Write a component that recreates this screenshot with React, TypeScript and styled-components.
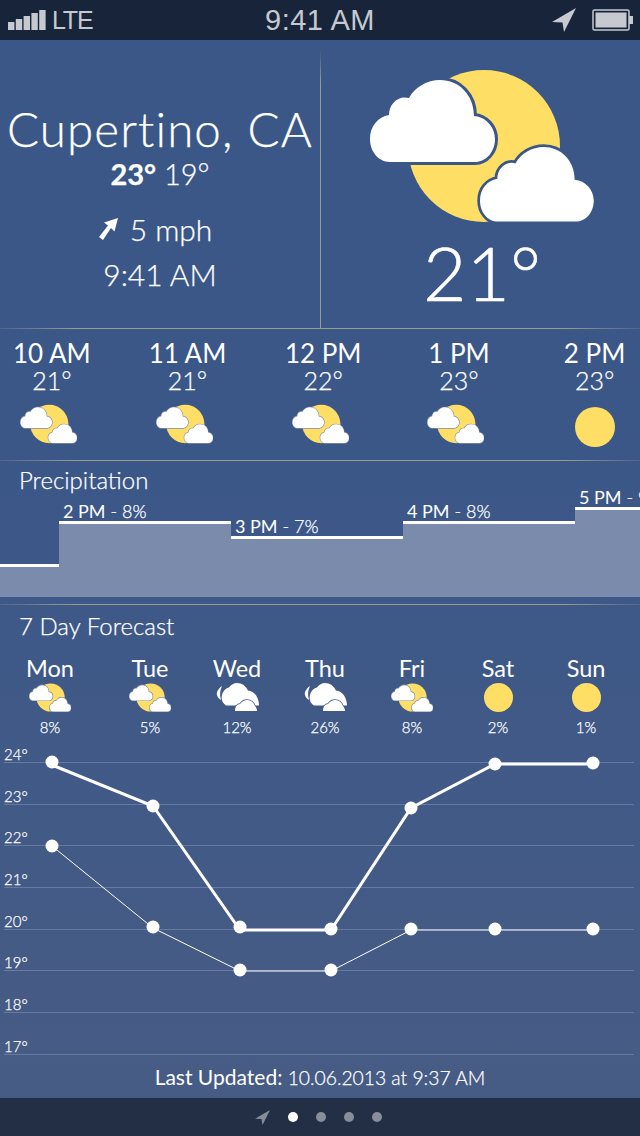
import React from "react";
import styled, { createGlobalStyle } from "styled-components";

const GlobalStyle = createGlobalStyle`
  html, body { margin: 0; padding: 0; background: #222f44; }
  * { box-sizing: border-box; }
`;

const CLOUD = "M20 82C8 82 0 71 0 59C0 46 8 37 19 35C19 24 28 15 39 18C45 7 57 0 70 0C89 0 104 15 104 36C116 37 125 47 125 59C125 72 116 82 105 82Z";

const Phone = styled.div`
  width: 640px;
  height: 1136px;
  display: flex;
  flex-direction: column;
  overflow: hidden;
  color: #fff;
  font-family: Lato, "Open Sans", sans-serif;
  font-weight: 300;
  -webkit-text-stroke: 0.25px #fff;
`;

const StatusBar = styled.div`
  height: 40px;
  flex: none;
  background: #18243a;
  color: #c6cad0;
  -webkit-text-stroke: 0;
  font-family: "Liberation Sans", Arial, sans-serif;
  font-size: 29px;
  font-weight: 400;
  display: grid;
  grid-template-columns: 1fr auto 1fr;
  align-items: center;
`;

const StatusGroup = styled.div<{ $end?: boolean }>`
  display: flex;
  align-items: center;
  gap: ${(p) => (p.$end ? "16px" : "6px")};
  padding-left: ${(p) => (p.$end ? "0" : "8px")};
  justify-content: ${(p) => (p.$end ? "flex-end" : "flex-start")};
`;

const Clock = styled.span`
  letter-spacing: 0.5px;
`;

const Carrier = styled.span`
  font-size: 25px;
  letter-spacing: -1.2px;
`;

const Content = styled.div`
  flex: 1;
  display: flex;
  flex-direction: column;
  background: linear-gradient(#3b5788, #3b5788 40%, #475c85);
`;

const Hero = styled.div`
  height: 288px;
  flex: none;
  display: grid;
  grid-template-columns: 320px 1px 319px;
`;

const HeroLeft = styled.div`
  display: flex;
  flex-direction: column;
  align-items: center;
  padding-top: 58px;
`;

const City = styled.div`
  font-size: 47.5px;
  line-height: 62px;
  letter-spacing: 1.1px;
  white-space: nowrap;
`;

const HighLow = styled.div`
  font-size: 29px;
  line-height: 28px;
  b { font-weight: 700; }
`;

const HeroLine = styled.div`
  font-size: 30px;
  line-height: 40px;
  display: flex;
  align-items: center;
  gap: 10px;
  margin-top: 21px;
  & + & { margin-top: 5px; }
`;

const WindSpeed = styled.span`
  padding-right: 10px;
`;

const VRule = styled.div`
  margin-top: 10px;
  background: linear-gradient(rgba(160,160,140,0), #9a9c90 12%, #9a9c90);
`;

const HeroRight = styled.div`
  display: flex;
  flex-direction: column;
  align-items: center;
  padding-top: 28px;
`;

const BigTemp = styled.div`
  font-size: 75px;
  line-height: 90px;
  margin: 3px 0 0 3px;
  -webkit-text-stroke: 0.6px #fff;
`;

const Divider = styled.div`
  height: 1px;
  flex: none;
  background: linear-gradient(90deg, rgba(160,160,140,.2), #9a9c90 12%, #9a9c90 88%, rgba(160,160,140,.2));
`;

const Hourly = styled.div`
  height: 131px;
  flex: none;
  display: grid;
  grid-template-columns: repeat(5, 135.7px);
  margin-left: -16px;
  padding-top: 9px;
`;

const HourCell = styled.div`
  display: flex;
  flex-direction: column;
  align-items: center;
`;

const HourName = styled.div`
  font-size: 26px;
  line-height: 30px;
  font-weight: 400;
  -webkit-text-stroke: 0;
  white-space: nowrap;
`;

const HourTemp = styled.div`
  font-size: 25px;
  line-height: 25px;
  margin-bottom: 14px;
`;

const HourIcon = styled.div`
  margin: -3px 6px 0 0;
`;

const SectionTitle = styled.div<{ $pt: number }>`
  font-size: 24px;
  line-height: 28px;
  padding: ${(p) => p.$pt}px 0 0 19px;
`;

const BarChart = styled.div`
  height: 112px;
  flex: none;
  margin-top: -9px;
  display: flex;
  align-items: flex-end;
  overflow: hidden;
`;

const BarColumn = styled.div<{ $w: number }>`
  width: ${(p) => p.$w}px;
  flex: none;
  display: flex;
  flex-direction: column;
`;

const BarLabel = styled.div`
  font-size: 18px;
  line-height: 20px;
  padding-left: 4px;
  white-space: nowrap;
  b { font-weight: 400; -webkit-text-stroke: 0; }
`;

const Bar = styled.div<{ $h: number }>`
  height: ${(p) => p.$h}px;
  background: #7a8bab;
  border-top: 3px solid #fff;
`;

const DayRow = styled.div`
  display: grid;
  grid-template-columns: 100px 100px 74px 102px 72px 100px 76px;
  padding-top: 13px;
`;

const DayCell = styled.div`
  display: flex;
  flex-direction: column;
  align-items: center;
`;

const DayName = styled.div`
  font-size: 23.5px;
  line-height: 30px;
  font-weight: 400;
  -webkit-text-stroke: 0;
`;

const DayPct = styled.div`
  font-size: 15px;
  line-height: 20px;
  margin-top: 5px;
`;

const Graph = styled.div`
  position: relative;
  height: 313px;
  flex: none;
  margin: 5px 6px 0 4px;
`;

const GraphRow = styled.div`
  height: 41.7px;
  border-bottom: 1px solid #66799f;
  display: flex;
  align-items: flex-end;
  font-size: 15px;
  line-height: 15px;
  &:first-child { height: 21px; }
`;

const GraphLines = styled.svg`
  position: absolute;
  left: -4px;
  top: 0;
`;

const Updated = styled.div`
  font-size: 19.3px;
  line-height: 24px;
  text-align: center;
  margin-top: 10px;
  b { font-size: 21px; font-weight: 400; -webkit-text-stroke: 0; }
`;

const Pager = styled.div`
  height: 38px;
  flex: none;
  background: #222f44;
  display: flex;
  align-items: center;
  justify-content: center;
  gap: 18px;
  padding-right: 3px;
`;

const Dot = styled.span<{ $on?: boolean }>`
  width: 10px;
  height: 10px;
  border-radius: 50%;
  background: ${(p) => (p.$on ? "#fff" : "#878e9a")};
`;

const Spacer = styled.div<{ $h: number }>`
  height: ${(p) => p.$h}px;
  flex: none;
`;

const Signal = () => (
  <svg width="38" height="20" viewBox="0 0 38 20">
    {[12, 9, 6, 3, 0].map((top, i) => (
      <rect key={i} x={i * 7.8} y={top} width="6.4" height={20 - top} fill="#c6cad0" />
    ))}
  </svg>
);

const LocationArrow = ({ size, color }: { size: number; color: string }) => (
  <svg width={size} height={size} viewBox="0 0 24 24">
    <path d="M24 0L0 14L10.5 14.5L12 24Z" fill={color} />
  </svg>
);

const Battery = () => (
  <svg width="48" height="22" viewBox="0 0 48 22">
    <rect x="1" y="1" width="36" height="20" rx="1.5" fill="none" stroke="#c6cad0" strokeWidth="1.5" />
    <rect x="3.5" y="3.5" width="31" height="15" fill="#c6cad0" />
    <rect x="37" y="7" width="4" height="8" fill="#c6cad0" />
  </svg>
);

const WindArrow = () => (
  <svg width="22" height="26" viewBox="0 0 22 26">
    <path d="M20 2L6 6.5L10 9.5L1 21L5 24L13 12L16.5 15.5Z" fill="#fff" />
  </svg>
);

// hero art and the small hourly/daily ones share this, the outline colour differs
const PartlyCloudy = ({ w, h, outline, sw }: { w: number; h: number; outline: string; sw: number }) => (
  <svg width={w} height={h} viewBox="0 0 226 156">
    <circle cx="116" cy="78" r="76" fill="#ffde65" />
    <path d={CLOUD} transform="translate(2 12)" fill="#fff" stroke={outline} strokeWidth={sw} style={{ paintOrder: "stroke" }} />
    <path d={CLOUD} transform="translate(112 79) scale(.91)" fill="#fff" stroke={outline} strokeWidth={sw} style={{ paintOrder: "stroke" }} />
  </svg>
);

const Overcast = () => (
  <svg width="43" height="29" viewBox="0 0 43 29">
    <path d="M6 3C3 5 0 9 1 12C1.5 14 3 16 5 17C3.5 12 4 7 6 3Z" fill="#fff" />
    <path d="M10 22.5C6 20 5 16 6 12C7 8 10 5 13 4.5C15 1.5 18 0 21 0C26 0 30 3 32 7.5C38 8 43 14 43 22.5Z" fill="#fff" />
    <path d="M19 28C19 24 21 21 24 21C26 18 29 17 31 17C35 17 38 20 39 23C40 24 41 26 41 28Z" fill="#fff" stroke="#445a85" strokeWidth="1.5" style={{ paintOrder: "stroke" }} />
  </svg>
);

const Sun = ({ size }: { size: number }) => (
  <svg width={size} height={size} viewBox="0 0 40 40">
    <circle cx="20" cy="20" r="20" fill="#ffde65" />
  </svg>
);

const hours = [
  { name: "10 AM", temp: "21°", sun: false },
  { name: "11 AM", temp: "21°", sun: false },
  { name: "12 PM", temp: "22°", sun: false },
  { name: "1 PM", temp: "23°", sun: false },
  { name: "2 PM", temp: "23°", sun: true },
];

const bars = [
  { w: 59, h: 33 },
  { w: 172, h: 76, time: "2 PM", pct: "8%" },
  { w: 172, h: 61, time: "3 PM", pct: "7%" },
  { w: 172, h: 76, time: "4 PM", pct: "8%" },
  { w: 65, h: 90, time: "5 PM", pct: "9%" },
];

const days = [
  { name: "Mon", pct: "8%", kind: "partly" },
  { name: "Tue", pct: "5%", kind: "partly" },
  { name: "Wed", pct: "12%", kind: "cloud" },
  { name: "Thu", pct: "26%", kind: "cloud" },
  { name: "Fri", pct: "8%", kind: "partly" },
  { name: "Sat", pct: "2%", kind: "sun" },
  { name: "Sun", pct: "1%", kind: "sun" },
];

const scale = ["24°", "23°", "22°", "21°", "20°", "19°", "18°", "17°"];

// dots sit a little off the lines in the original, so both are listed
const highLine = [[52, 765], [153, 806], [240, 930], [331, 930], [411, 808], [495, 764], [593, 764]];
const lowLine = [[52, 846], [153, 928], [240, 971], [331, 971], [411, 930], [495, 930], [593, 930]];
const dots = [
  [52, 762], [153, 806], [240, 927], [331, 929], [411, 808], [495, 764], [593, 763],
  [52, 846], [153, 927], [240, 970], [331, 970], [411, 929], [495, 929], [593, 929],
];

const toPoints = (pts: number[][]) => pts.map((p) => p.join(",")).join(" ");

const App = () => {
  return (
    <Phone>
      <GlobalStyle />
      <StatusBar>
        <StatusGroup>
          <Signal />
          <Carrier>LTE</Carrier>
        </StatusGroup>
        <Clock>9:41 AM</Clock>
        <StatusGroup $end>
          <LocationArrow size={24} color="#c6cad0" />
          <Battery />
        </StatusGroup>
      </StatusBar>
      <Content>
        <Hero>
          <HeroLeft>
            <City>Cupertino, CA</City>
            <HighLow>
              <b>23°</b> 19°
            </HighLow>
            <HeroLine>
              <WindArrow />
              <WindSpeed>5 mph</WindSpeed>
            </HeroLine>
            <HeroLine>9:41 AM</HeroLine>
          </HeroLeft>
          <VRule />
          <HeroRight>
            <PartlyCloudy w={226} h={156} outline="#3b5788" sw={6} />
            <BigTemp>21°</BigTemp>
          </HeroRight>
        </Hero>
        <Divider />
        <Hourly>
          {hours.map((h) => (
            <HourCell key={h.name}>
              <HourName>{h.name}</HourName>
              <HourTemp>{h.temp}</HourTemp>
              {h.sun ? (
                <Sun size={40} />
              ) : (
                <HourIcon>
                  <PartlyCloudy w={57} h={40} outline="#7f8da8" sw={5} />
                </HourIcon>
              )}
            </HourCell>
          ))}
        </Hourly>
        <Divider />
        <SectionTitle $pt={5}>Precipitation</SectionTitle>
        <BarChart>
          {bars.map((b, i) => (
            <BarColumn key={i} $w={b.w}>
              {b.time && (
                <BarLabel>
                  <b>{b.time}</b> - {b.pct}
                </BarLabel>
              )}
              <Bar $h={b.h} />
            </BarColumn>
          ))}
        </BarChart>
        <Spacer $h={7} />
        <Divider />
        <SectionTitle $pt={7}>7 Day Forecast</SectionTitle>
        <DayRow>
          {days.map((d) => (
            <DayCell key={d.name}>
              <DayName>{d.name}</DayName>
              {d.kind === "partly" && <PartlyCloudy w={42} h={29} outline="#7f8da8" sw={7} />}
              {d.kind === "cloud" && <Overcast />}
              {d.kind === "sun" && <Sun size={29} />}
              <DayPct>{d.pct}</DayPct>
            </DayCell>
          ))}
        </DayRow>
        <Graph>
          {scale.map((s) => (
            <GraphRow key={s}>{s}</GraphRow>
          ))}
          <GraphLines width="640" height="330" viewBox="0 742 640 330">
            <polyline points={toPoints(highLine)} fill="none" stroke="#fff" strokeWidth="3" />
            <polyline points={toPoints(lowLine)} fill="none" stroke="#fff" strokeWidth="1" />
            {dots.map(([x, y], i) => (
              <circle key={i} cx={x} cy={y} r="6.5" fill="#fff" />
            ))}
          </GraphLines>
        </Graph>
        <Updated>
          <b>Last Updated:</b> 10.06.2013 at 9:37 AM
        </Updated>
      </Content>
      <Pager>
        <LocationArrow size={15} color="#878e9a" />
        <Dot $on />
        <Dot />
        <Dot />
        <Dot />
      </Pager>
    </Phone>
  );
};

export default App;
